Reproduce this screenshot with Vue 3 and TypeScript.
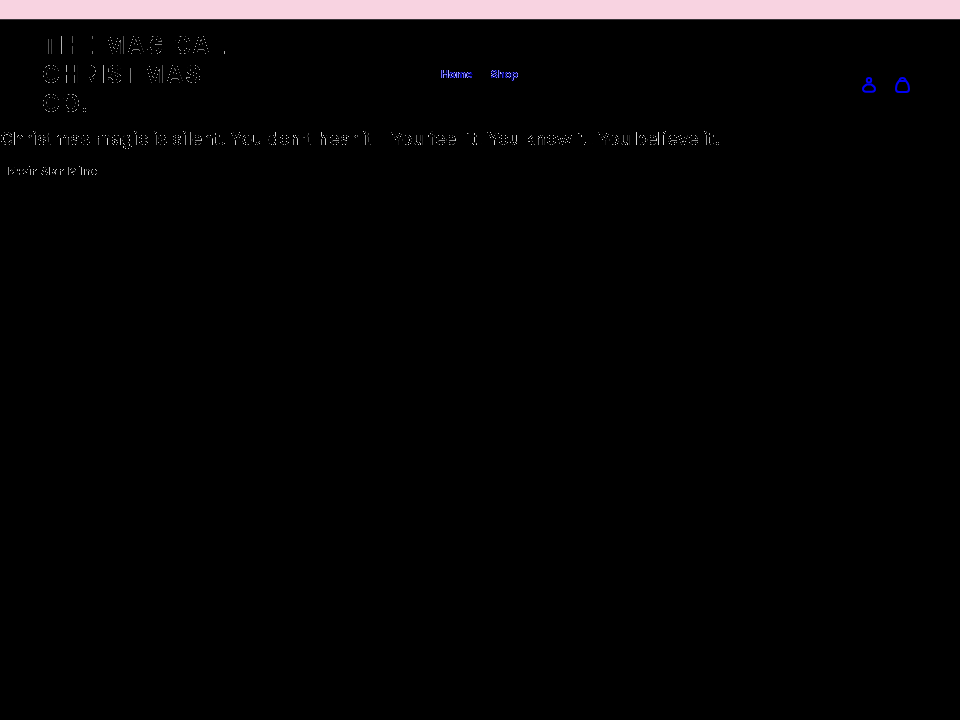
<script setup lang="ts">
const navItems: string[] = ['Home', 'Shop']
</script>

<template>
  <div class="page">
    <svg class="defs" width="0" height="0" aria-hidden="true">
      <filter id="edge" color-interpolation-filters="sRGB" x="0" y="0" width="100%" height="100%">
        <feComponentTransfer>
          <feFuncR type="table" tableValues="0 0 0 0 0 0.85 0.85 0 0" />
          <feFuncG type="table" tableValues="0 0 0 0 0 0.85 0.85 0 0" />
          <feFuncB type="table" tableValues="0 0 0 0 0 0.85 0.85 0 0" />
        </feComponentTransfer>
      </filter>
      <filter id="edge-logo" color-interpolation-filters="sRGB" x="0" y="0" width="100%" height="100%">
        <feComponentTransfer>
          <feFuncR type="table" tableValues="0 0 0 0 0 0.7 0.7 0 0" />
          <feFuncG type="table" tableValues="0 0 0 0 0 0.7 0.7 0 0" />
          <feFuncB type="table" tableValues="0 0 0 0 0 0.7 0.7 0 0" />
        </feComponentTransfer>
      </filter>
      <filter id="edge-link" color-interpolation-filters="sRGB" x="0" y="0" width="100%" height="100%">
        <feComponentTransfer>
          <feFuncR type="table" tableValues="0 0 0.4 0.8 0.4 0 0" />
          <feFuncG type="table" tableValues="0 0 0.4 0.8 0.4 0 0" />
          <feFuncB type="table" tableValues="0 0.5 1 1 1 0.7 0.3" />
        </feComponentTransfer>
      </filter>
    </svg>
    <div class="announce"></div>
    <header class="header">
      <div class="logo">THE MAGICAL CHRISTMAS CO.</div>
      <nav class="nav">
        <a v-for="item in navItems" :key="item" class="nav-link">{{ item }}</a>
      </nav>
      <div class="icons">
        <svg width="14" height="16" viewBox="0 0 14 16" fill="none" stroke="#0000f5" stroke-width="2">
          <circle cx="7" cy="3.300" r="2.200" />
          <path d="M4.800 7.500h4.400c2 1 3.800 2.600 3.800 4.500 0 1.800-1.200 2.800-3 2.800H4C2.200 14.800 1 13.800 1 12c0-1.900 1.800-3.500 3.800-4.500z" />
        </svg>
        <svg width="15" height="16" viewBox="0 0 15 16" fill="none" stroke="#0000f5" stroke-width="2">
          <path d="M4.500 4C4.500 2 5.700 1 7.500 1s3 1 3 3" />
          <path d="M4 4h7c1.500 1.500 3 5 3 8 0 1.800-1 2.900-2.800 2.900H3.800C2 14.900 1 13.800 1 12c0-3 1.500-6.500 3-8z" />
        </svg>
      </div>
    </header>
    <p class="quote">Christmas magic is silent. You don't hear it - You feel it. You know it. You believe it.</p>
    <p class="author">- Kevin Alan Milne</p>
  </div>
</template>

<style>
html, body { margin: 0; background: #000; }
</style>

<style scoped>
.page {
  min-height: 720px;
  background: #000;
  font-family: Inter, "Liberation Sans", sans-serif;
  overflow: hidden;
}
.defs { position: absolute; }
.announce {
  height: 19px;
  background: #f8d3e1;
  border-bottom: 1px solid #3a353a;
}
.header {
  display: grid;
  grid-template-columns: 360px 1fr auto;
  align-items: flex-start;
  padding: 11px 50px 0 42px;
  height: 100px;
  box-sizing: border-box;
}
.logo {
  width: 190px;
  font-size: 24px;
  line-height: 29px;
  letter-spacing: 1.67px;
  font-weight: 700;
  color: #fff;
  background: #000;
  filter: url(#edge-logo);
}
.nav {
  display: flex;
  gap: 18px;
  margin-top: 36px;
  margin-left: 39px;
  font-size: 11px;
  line-height: 14px;
  font-weight: 700;
}
.nav-link { color: #fff; background: #000; filter: url(#edge-link); }
.icons {
  display: flex;
  gap: 19px;
  margin-top: 46px;
}
.quote {
  margin: 8px 0 0;
  font-size: 18px;
  line-height: 22px;
  font-weight: 700;
  color: #fff;
  background: #000;
  filter: url(#edge);
}
.author {
  margin: 14px 0 0;
  font-size: 11px;
  line-height: 14px;
  font-weight: 700;
  color: #fff;
  background: #000;
  filter: url(#edge);
}
</style>
